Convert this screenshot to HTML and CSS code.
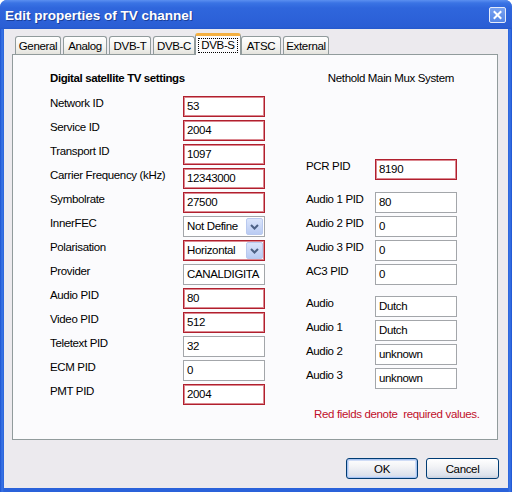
FILE: index.html
```html
<!DOCTYPE html>
<html>
<head>
<meta charset="utf-8">
<link rel="stylesheet" href="styles.css">
</head>
<body>
<div class="window">
  <div class="titlebar">
    <span class="title">Edit properties of TV channel</span>
    <span class="close">
      <svg width="15" height="14" viewBox="0 0 15 14">
        <path d="M4.5 4 L10.5 10 M10.5 4 L4.5 10" stroke="#fff" stroke-width="2" stroke-linecap="square"/>
      </svg>
    </span>
  </div>
  <div class="client">
    <div class="tabs">
      <div class="tab w-general">General</div>
      <div class="tab w-analog">Analog</div>
      <div class="tab w-dvbt">DVB-T</div>
      <div class="tab w-dvbc">DVB-C</div>
      <div class="tab selected w-dvbs"><span class="focus">DVB-S</span></div>
      <div class="tab w-atsc">ATSC</div>
      <div class="tab w-ext">External</div>
    </div>
    <div class="panel">
      <div class="col left">
        <div class="header bold">Digital satellite TV settings</div>
        <div class="row"><span class="label">Network ID</span><span class="field req">53</span></div>
        <div class="row"><span class="label">Service ID</span><span class="field req">2004</span></div>
        <div class="row"><span class="label">Transport ID</span><span class="field req">1097</span></div>
        <div class="row"><span class="label">Carrier Frequency (kHz)</span><span class="field req">12343000</span></div>
        <div class="row"><span class="label">Symbolrate</span><span class="field req">27500</span></div>
        <div class="row"><span class="label">InnerFEC</span>
          <span class="field select"><span class="sel-text">Not Define</span><span class="sel-btn"><svg width="15" height="15" viewBox="0 0 15 15"><path d="M4 6 L7.5 9.5 L11 6" stroke="#4d6185" stroke-width="2" fill="none"/></svg></span></span></div>
        <div class="row"><span class="label">Polarisation</span>
          <span class="field select req"><span class="sel-text">Horizontal</span><span class="sel-btn"><svg width="15" height="15" viewBox="0 0 15 15"><path d="M4 6 L7.5 9.5 L11 6" stroke="#4d6185" stroke-width="2" fill="none"/></svg></span></span></div>
        <div class="row"><span class="label">Provider</span><span class="field">CANALDIGITA</span></div>
        <div class="row"><span class="label">Audio PID</span><span class="field req">80</span></div>
        <div class="row"><span class="label">Video PID</span><span class="field req">512</span></div>
        <div class="row"><span class="label">Teletext PID</span><span class="field">32</span></div>
        <div class="row"><span class="label">ECM PID</span><span class="field">0</span></div>
        <div class="row"><span class="label">PMT PID</span><span class="field req">2004</span></div>
      </div>
      <div class="col right">
        <div class="header mux">Nethold Main Mux System</div>
        <div class="row pcr"><span class="label">PCR PID</span><span class="field req">8190</span></div>
        <div class="row"><span class="label">Audio 1 PID</span><span class="field">80</span></div>
        <div class="row"><span class="label">Audio 2 PID</span><span class="field">0</span></div>
        <div class="row"><span class="label">Audio 3 PID</span><span class="field">0</span></div>
        <div class="row"><span class="label">AC3 PID</span><span class="field">0</span></div>
        <div class="row gap"><span class="label">Audio</span><span class="field">Dutch</span></div>
        <div class="row"><span class="label">Audio 1</span><span class="field">Dutch</span></div>
        <div class="row"><span class="label">Audio 2</span><span class="field">unknown</span></div>
        <div class="row"><span class="label">Audio 3</span><span class="field">unknown</span></div>
        <div class="note">Red fields denote&nbsp; required values.</div>
      </div>
    </div>
    <div class="buttons">
      <div class="btn default">OK</div>
      <div class="btn">Cancel</div>
    </div>
  </div>
</div>
</body>
</html>
```
FILE: styles.css
```css
html, body {
  margin: 0;
  padding: 0;
  width: 512px;
  height: 492px;
  overflow: hidden;
  background: #ffffff;
}
.window {
  width: 512px;
  height: 492px;
  box-sizing: border-box;
  display: flex;
  flex-direction: column;
  background: linear-gradient(90deg, #1c52d0 0px, #3a75e6 2px, #2a62da 4px, #2a62da 508px, #3a75e6 510px, #1c52d0 512px);
  border-radius: 7px 7px 0 0;
  font-family: "Liberation Sans", Arial, sans-serif;
  font-size: 11.5px;
  letter-spacing: -0.35px;
  color: #000;
}
.titlebar {
  height: 29px;
  flex: none;
  display: flex;
  align-items: center;
  justify-content: space-between;
  padding: 0 6px 0 5px;
  border-radius: 7px 7px 0 0;
  background: linear-gradient(180deg, #5b8ff0 0px, #3a73e4 3px, #2f66dc 8px, #2c61d8 20px, #2a5ed4 27px, #2458cc 29px);
}
.title {
  color: #fff;
  font-weight: bold;
  font-size: 13.5px;
  letter-spacing: 0;
  text-shadow: 1px 1px 0 #1a3f9a;
  margin-top: 1px;
}
.close {
  width: 15px;
  height: 14px;
  display: flex;
  border: 1px solid #e6ecfa;
  border-radius: 2px;
  background: linear-gradient(180deg, #7aa2f0, #5486e6);
  margin-top: 1px;
}
.client {
  flex: 1;
  margin: 0 4px 4px 4px;
  background: #eceaee;
  padding: 4px 10px 0 8px;
  display: flex;
  flex-direction: column;
}
.tabs {
  display: flex;
  align-items: flex-end;
  height: 21px;
  padding-left: 3px;
  gap: 2px;
  position: relative;
  z-index: 2;
}
.tab {
  height: 18px;
  box-sizing: border-box;
  border: 1px solid #919b9c;
  border-bottom: none;
  border-radius: 3px 3px 0 0;
  background: linear-gradient(180deg, #ffffff, #f3f3f0 60%, #e4e3dd);
  display: flex;
  align-items: center;
  justify-content: center;
  padding-top: 1px;
}
.tab.selected {
  height: 22px;
  margin: 0 -2px -1px -2px;
  background: #fcfcfe;
  border-top: 3px solid #f4b042;
  border-radius: 3px 3px 0 0;
  padding-top: 0;
}
.focus {
  border: 1px dotted #000;
  padding: 0 2px;
  line-height: 13px;
}
.w-general { width: 46px; }
.w-analog { width: 44px; }
.w-dvbt { width: 42px; }
.w-dvbc { width: 42px; }
.w-dvbs { width: 46px; }
.w-atsc { width: 40px; }
.w-ext { width: 46px; }
.panel {
  height: 386px;
  box-sizing: border-box;
  border: 1px solid #919b9c;
  background: #fbfbfd;
  display: flex;
  padding-left: 37px;
  position: relative;
  z-index: 1;
}
.col {
  display: flex;
  flex-direction: column;
}
.col.left { width: 215px; }
.col.right { width: 151px; margin-left: 41px; }
.header {
  height: 41px;
  box-sizing: border-box;
  padding-top: 16px;
  line-height: 14px;
}
.bold { font-weight: bold; letter-spacing: -0.4px; }
.mux { text-align: right; padding-right: 3px; }
.row {
  height: 24px;
  display: flex;
  align-items: flex-start;
}
.col.left .label { width: 133px; }
.col.right .label { width: 69px; }
.label {
  line-height: 14px;
  white-space: nowrap;
}
.field {
  width: 82px;
  height: 21px;
  box-sizing: border-box;
  border: 1px solid #a3a6aa;
  background: #fff;
  padding: 0 3px;
  line-height: 19px;
  white-space: nowrap;
  overflow: hidden;
}
.field.req {
  border: 1px solid #b0202e;
  box-shadow: inset 0 0 0 1px #dc8890;
}
.select {
  display: flex;
  padding-right: 1px;
}
.sel-text {
  flex: 1;
  overflow: hidden;
}
.sel-btn {
  flex: none;
  width: 17px;
  height: 17px;
  margin-top: 1px;
  box-sizing: border-box;
  border: 1px solid #b9c9ef;
  border-radius: 2px;
  background: linear-gradient(180deg, #dbe5fb, #b9cbf3);
  display: flex;
  align-items: center;
  justify-content: center;
}
.row.pcr { margin-top: 63px; margin-bottom: 9px; }
.row.gap { margin-top: 8px; }
.note {
  margin-top: 15px;
  padding-left: 8px;
  line-height: 14px;
  color: #c0102a;
  white-space: nowrap;
}
.buttons {
  display: flex;
  justify-content: flex-end;
  gap: 8px;
  margin-top: 18px;
  margin-right: -1px;
}
.btn {
  width: 73px;
  height: 21px;
  box-sizing: border-box;
  border: 1px solid #003c74;
  border-radius: 3px;
  background: linear-gradient(180deg, #ffffff, #f2f3f6 40%, #dde2ec 85%, #c9d0de);
  display: flex;
  align-items: center;
  justify-content: center;
}
.btn.default {
  width: 72px;
  box-shadow: inset 0 0 0 1px #a8c4f0, inset 0 0 0 2px #cfdcf6;
}
```
